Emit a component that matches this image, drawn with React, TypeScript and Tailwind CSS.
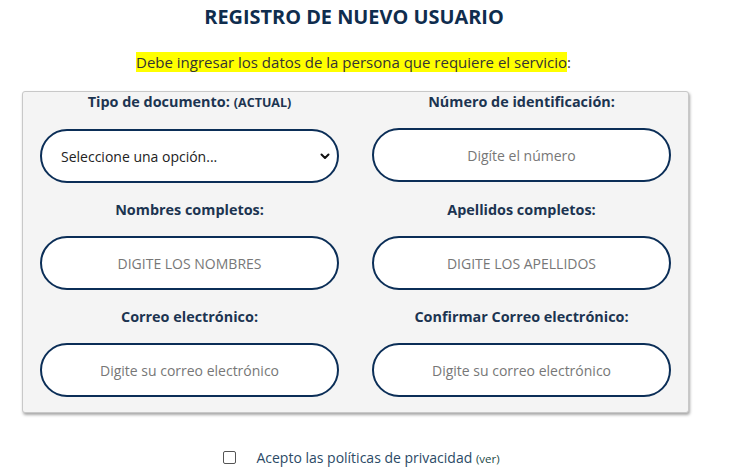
import React from "react";

const font = { fontFamily: '"Open Sans", "Liberation Sans", sans-serif' };

interface Field {
  label: string;
  small?: string;
  placeholder?: string;
  select?: boolean;
}

const fields: Field[] = [
  { label: "Tipo de documento:", small: "(ACTUAL)", select: true },
  { label: "Número de identificación:", placeholder: "Digíte el número" },
  { label: "Nombres completos:", placeholder: "DIGITE LOS NOMBRES" },
  { label: "Apellidos completos:", placeholder: "DIGITE LOS APELLIDOS" },
  { label: "Correo electrónico:", placeholder: "Digite su correo electrónico" },
  { label: "Confirmar Correo electrónico:", placeholder: "Digite su correo electrónico" },
];

export default function App() {
  return (
    <div className="w-[733px] h-[474px] bg-white overflow-hidden" style={font}>
      <h1 className="text-center text-[19.9px] font-bold text-[#0f2d4e] pt-[4px] leading-[26px] ml-[-25px]">
        REGISTRO DE NUEVO USUARIO
      </h1>
      <p className="text-center text-[15px] text-[#333] mt-[22px] leading-[20px] ml-[-26px]">
        <span className="bg-[#ffff00]">Debe ingresar los datos de la persona que requiere el servicio</span>:
      </p>

      <div className="ml-[22px] mt-[19px] w-[667px] bg-[#f4f4f4] border border-[#c8c8c8] rounded-[3px] shadow-[1px_2px_3px_rgba(0,0,0,0.35)] px-[17px] pb-[15px]">
        <div className="grid grid-cols-2 gap-x-[33px] gap-y-[17px]">
          {fields.map((f) => (
            <div key={f.label} className="flex flex-col items-center">
              <label className="text-[14.4px] font-bold text-[#1c3451] leading-[20px] whitespace-nowrap">
                {f.label}
                {f.small && <span className="text-[12.5px] ml-[4px]">{f.small}</span>}
              </label>
              <div className="mt-[16px] w-full h-[54px] bg-white border-2 border-[#0b2e57] rounded-full flex items-center">
                {f.select ? (
                  <div className="w-full flex items-center justify-between pl-[19px] pr-[6px]">
                    <span className="text-[14px] text-[#222]">Seleccione una opción...</span>
                    <svg width="12" height="12" viewBox="0 0 12 12">
                      <path d="M2.5 4.5 L6 8 L9.5 4.5" fill="none" stroke="#111" strokeWidth="2" strokeLinecap="round" strokeLinejoin="round" />
                    </svg>
                  </div>
                ) : (
                  <span className="w-full text-center text-[14px] text-[#777]">{f.placeholder}</span>
                )}
              </div>
            </div>
          ))}
        </div>
      </div>

      <div className="flex items-center justify-center mt-[34px] ml-[-10px]">
        <span className="w-[13px] h-[13px] border border-[#555] rounded-[2px] bg-white mr-[20px]" />
        <span className="text-[14px] text-[#2b4a66]">
          Acepto las políticas de privacidad <span className="text-[11.5px] text-[#1d4a48]">(ver)</span>
        </span>
      </div>
    </div>
  );
}
